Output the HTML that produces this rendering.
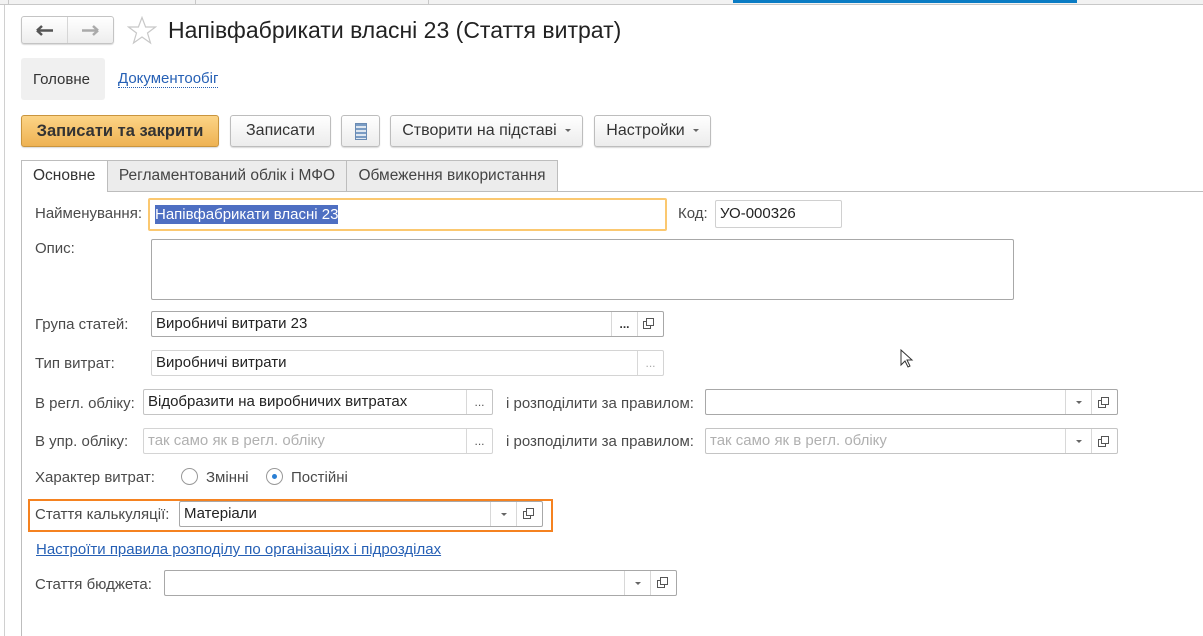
<!DOCTYPE html>
<html><head><meta charset="utf-8"><style>
*{box-sizing:border-box;margin:0;padding:0}
body{width:1203px;height:636px;background:#fff;font-family:"Liberation Sans",Arial,sans-serif;font-size:15px;color:#333;position:relative;overflow:hidden}
.a{position:absolute;white-space:nowrap}
.lbl{position:absolute;color:#4a4a4a;font-size:15px;line-height:16px;white-space:nowrap}
.inp{position:absolute;border:1px solid #b9b9b9;border-radius:2px;background:#fff;height:26px;font-size:15px;line-height:24px;padding-left:4px;color:#222;white-space:nowrap}
.btnin{position:absolute;top:0;height:24px;border-left:1px solid #d8d8d8;text-align:center;color:#555;font-size:12px;line-height:24px}
.btn{position:absolute;height:32px;border:1px solid #bdbdbd;border-radius:3px;background:linear-gradient(#fff,#ececec);box-shadow:0 1px 1px rgba(0,0,0,.15);font-size:16px;line-height:30px;text-align:center;color:#333;white-space:nowrap}
.tri{display:inline-block;width:0;height:0;border-left:3px solid transparent;border-right:3px solid transparent;border-top:3px solid #666;vertical-align:middle;margin-left:8px}
.cp{position:absolute;width:11px;height:11px}
</style></head><body>
<div class="a" style="left:0;top:0;width:1203px;height:5px;border-bottom:1px solid #c8c8c8;background:#f2f2f2"></div>
<div class="a" style="left:8px;top:0;width:1px;height:5px;background:#c8c8c8"></div>
<div class="a" style="left:195px;top:0;width:1px;height:5px;background:#c8c8c8"></div>
<div class="a" style="left:428px;top:0;width:1px;height:5px;background:#c8c8c8"></div>
<div class="a" style="left:733px;top:0;width:344px;height:3px;background:#0a7cc4"></div>
<div class="a" style="left:4px;top:5px;width:1px;height:631px;background:#d0d0d0"></div>

<div class="a" style="left:21px;top:16px;width:93px;height:28px;border:1px solid #c4c4c4;border-radius:3px;background:linear-gradient(#fff,#ededed);box-shadow:0 1px 1px rgba(0,0,0,.15)"></div>
<div class="a" style="left:67px;top:17px;width:1px;height:26px;background:#d6d6d6"></div>
<svg class="a" style="left:36px;top:25px" width="18" height="11"><path d="M1 5.5H17M1 5.5L6 1M1 5.5L6 10" stroke="#555" stroke-width="2.5" fill="none"/></svg>
<svg class="a" style="left:81px;top:25px" width="18" height="11"><path d="M1 5.5H17M17 5.5L12 1M17 5.5L12 10" stroke="#aaa" stroke-width="2.5" fill="none"/></svg>
<svg class="a" style="left:127px;top:16px" width="30" height="29"><path d="M15 1.5L18.6 11H28.5L20.5 17L23.5 27L15 21L6.5 27L9.5 17L1.5 11H11.4Z" fill="none" stroke="#c8c8c8" stroke-width="1.2"/></svg>
<div class="a" style="left:168px;top:15px;font-size:23px;color:#222;line-height:30px">Напівфабрикати власні 23 (Стаття витрат)</div>

<div class="a" style="left:21px;top:58px;width:84px;height:42px;background:#f0f0f0;border-radius:3px"></div>
<div class="a" style="left:33px;top:71px;font-size:15px;color:#333">Головне</div>
<div class="a" style="left:118px;top:71px;font-size:15px;color:#2660b5;border-bottom:1px dotted #2660b5;line-height:16px">Документообіг</div>

<div class="btn" style="left:21px;top:115px;width:198px;background:linear-gradient(#fcd486,#eeb253);border-color:#c9953e;font-weight:bold;font-size:16.5px;color:#333">Записати та закрити</div>
<div class="btn" style="left:230px;top:115px;width:101px">Записати</div>
<div class="btn" style="left:341px;top:115px;width:39px"><div style="position:absolute;left:13px;top:7px;width:12px;height:17px;background:repeating-linear-gradient(#7a9cc4 0 2px,#dfe7f0 2px 4px);border:1px solid #6a8bb3"></div></div>
<div class="btn" style="left:390px;top:115px;width:193px">Створити на підставі<span class="tri"></span></div>
<div class="btn" style="left:594px;top:115px;width:117px">Настройки<span class="tri"></span></div>

<div class="a" style="left:21px;top:191px;width:1182px;height:1px;background:#bdbdbd"></div>
<div class="a" style="left:21px;top:191px;width:1px;height:445px;background:#bdbdbd"></div>
<div class="a" style="left:21px;top:160px;width:87px;height:32px;border:1px solid #bdbdbd;border-bottom:none;background:#fff;font-size:15.5px;line-height:30px;padding-left:11px;color:#333">Основне</div>
<div class="a" style="left:107px;top:160px;width:240px;height:31px;border:1px solid #bdbdbd;border-bottom:none;background:#ececec;font-size:15.5px;line-height:29px;text-align:center;color:#444">Регламентований облік і МФО</div>
<div class="a" style="left:346px;top:160px;width:212px;height:31px;border:1px solid #bdbdbd;border-bottom:none;background:#ececec;font-size:15.5px;line-height:29px;text-align:center;color:#444">Обмеження використання</div>

<div class="lbl" style="left:35px;top:206px">Найменування:</div>
<div class="inp" style="left:148px;top:198px;width:519px;height:33px;border:2px solid #fbc870;line-height:29px;padding-left:5px"><span style="background:#4e6fc2;color:#fff;padding:1px 0">Напівфабрикати власні 23</span></div>
<div class="lbl" style="left:678px;top:206px">Код:</div>
<div class="inp" style="left:715px;top:200px;width:127px;height:28px;border-color:#d0d0d0;line-height:26px">УО-000326</div>

<div class="lbl" style="left:35px;top:241px">Опис:</div>
<div class="inp" style="left:151px;top:239px;width:863px;height:61px;border-color:#a8a8a8"></div>

<div class="lbl" style="left:35px;top:317px">Група статей:</div>
<div class="inp" style="left:151px;top:311px;width:513px;border-color:#a8a8a8">Виробничі витрати 23
<div class="btnin" style="left:459px;width:26px;font-weight:bold;color:#333">...</div>
<div class="btnin" style="left:485px;width:26px"></div></div>
<svg class="cp" style="left:643px;top:318px"><path d="M3.5 0.5H10.5V7.5H3.5Z M3.5 3.5H0.5V10.5H7.5V7.5" fill="none" stroke="#555"/></svg>

<div class="lbl" style="left:35px;top:356px">Тип витрат:</div>
<div class="inp" style="left:151px;top:350px;width:513px;border-color:#d4d4d4">Виробничі витрати
<div class="btnin" style="left:485px;width:26px;color:#aaa">...</div></div>

<div class="lbl" style="left:35px;top:396px">В регл. обліку:</div>
<div class="inp" style="left:143px;top:389px;width:350px;border-color:#c4c4c4">Відобразити на виробничих витратах
<div class="btnin" style="left:322px;width:26px">...</div></div>
<div class="lbl" style="left:506px;top:396px">і розподілити за правилом:</div>
<div class="inp" style="left:705px;top:389px;width:413px;border-color:#a8a8a8">
<div class="btnin" style="left:359px;width:26px"><span class="tri" style="margin:0"></span></div>
<div class="btnin" style="left:385px;width:26px"></div></div>
<svg class="cp" style="left:1098px;top:397px"><path d="M3.5 0.5H10.5V7.5H3.5Z M3.5 3.5H0.5V10.5H7.5V7.5" fill="none" stroke="#555"/></svg>

<div class="lbl" style="left:35px;top:434px">В упр. обліку:</div>
<div class="inp" style="left:143px;top:428px;width:350px;border-color:#d4d4d4;color:#b0b0b0">так само як в регл. обліку
<div class="btnin" style="left:322px;width:26px;color:#555">...</div></div>
<div class="lbl" style="left:506px;top:434px">і розподілити за правилом:</div>
<div class="inp" style="left:705px;top:428px;width:413px;border-color:#c4c4c4;color:#b0b0b0">так само як в регл. обліку
<div class="btnin" style="left:359px;width:26px"><span class="tri" style="margin:0"></span></div>
<div class="btnin" style="left:385px;width:26px"></div></div>
<svg class="cp" style="left:1098px;top:436px"><path d="M3.5 0.5H10.5V7.5H3.5Z M3.5 3.5H0.5V10.5H7.5V7.5" fill="none" stroke="#555"/></svg>

<div class="lbl" style="left:35px;top:470px">Характер витрат:</div>
<div class="a" style="left:181px;top:468px;width:17px;height:17px;border:1px solid #999;border-radius:50%"></div>
<div class="lbl" style="left:206px;top:470px">Змінні</div>
<div class="a" style="left:266px;top:468px;width:17px;height:17px;border:1px solid #999;border-radius:50%"><div style="position:absolute;left:5px;top:5px;width:5px;height:5px;border-radius:50%;background:#2a7fd4"></div></div>
<div class="lbl" style="left:291px;top:470px">Постійні</div>

<div class="a" style="left:28px;top:499px;width:525px;height:33px;border:2px solid #f58220"></div>
<div class="lbl" style="left:35px;top:507px">Стаття калькуляції:</div>
<div class="inp" style="left:179px;top:501px;width:364px;border-color:#a8a8a8">Матеріали
<div class="btnin" style="left:310px;width:26px"><span class="tri" style="margin:0"></span></div>
<div class="btnin" style="left:336px;width:26px"></div></div>
<svg class="cp" style="left:523px;top:508px"><path d="M3.5 0.5H10.5V7.5H3.5Z M3.5 3.5H0.5V10.5H7.5V7.5" fill="none" stroke="#555"/></svg>

<div class="a" style="left:36px;top:541px;font-size:15px;color:#2660b5;text-decoration:underline">Настроїти правила розподілу по організаціях і підрозділах</div>

<div class="lbl" style="left:35px;top:577px">Стаття бюджета:</div>
<div class="inp" style="left:164px;top:570px;width:513px;border-color:#a8a8a8">
<div class="btnin" style="left:459px;width:26px"><span class="tri" style="margin:0"></span></div>
<div class="btnin" style="left:485px;width:26px"></div></div>
<svg class="cp" style="left:657px;top:577px"><path d="M3.5 0.5H10.5V7.5H3.5Z M3.5 3.5H0.5V10.5H7.5V7.5" fill="none" stroke="#555"/></svg>

<svg class="a" style="left:900px;top:349px" width="14" height="20"><path d="M1 1V16L5 12L8 18L10 17L7 11H12Z" fill="#fff" stroke="#333"/></svg>
</body></html>
